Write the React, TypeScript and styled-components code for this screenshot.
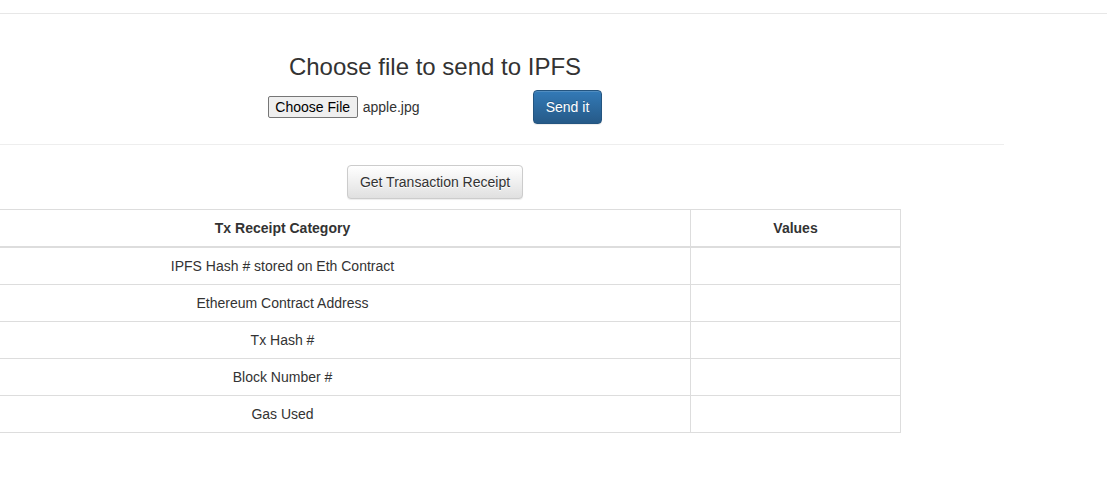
import React from "react";
import styled, { createGlobalStyle } from "styled-components";

const Global = createGlobalStyle`
  html, body { margin: 0; padding: 0; background: #fff; }
  body {
    font-family: "Liberation Sans", Arial, Helvetica, sans-serif;
    font-size: 14px;
    line-height: 1.42857143;
    color: #333;
    overflow: hidden;
  }
  * { box-sizing: border-box; }
`;

const TopBar = styled.div`
  height: 14px;
  border-bottom: 1px solid #e7e7e7;
`;

const Page = styled.div`
  display: flex;
  flex-direction: column;
`;

const Column = styled.div`
  width: 870px;
  display: flex;
  flex-direction: column;
  align-items: center;
`;

const Title = styled.h3`
  margin: 40px 0 0;
  font-size: 24px;
  font-weight: 500;
  line-height: 1.1;
  color: #333;
`;

const UploadForm = styled.form`
  margin-top: 10px;
  display: flex;
  align-items: center;
`;

const FilePicker = styled.div`
  width: 265px;
  display: flex;
  align-items: center;
  gap: 5px;
  margin-top: -1px;
`;

const FileButton = styled.span`
  display: inline-flex;
  align-items: center;
  justify-content: center;
  width: 90px;
  height: 22px;
  border: 1px solid #767676;
  border-radius: 2px;
  background: #efefef;
  font-size: 14px;
  color: #000;
`;

const FileName = styled.span`
  font-size: 14px;
  color: #333;
`;

const Button = styled.button<{ $primary?: boolean }>`
  display: inline-block;
  height: 34px;
  padding: 6px 12px;
  font-family: inherit;
  font-size: 14px;
  line-height: 1.42857143;
  border-radius: 4px;
  cursor: pointer;
  box-shadow: inset 0 1px 0 rgba(255, 255, 255, 0.15), 0 1px 1px rgba(0, 0, 0, 0.075);
  color: ${(p) => (p.$primary ? "#fff" : "#333")};
  border: 1px solid ${(p) => (p.$primary ? "#245580" : "#ccc")};
  background-image: ${(p) =>
    p.$primary
      ? "linear-gradient(to bottom, #337ab7 0, #265a88 100%)"
      : "linear-gradient(to bottom, #fff 0, #e0e0e0 100%)"};
  text-shadow: ${(p) => (p.$primary ? "0 -1px 0 rgba(0,0,0,.2)" : "0 1px 0 #fff")};
`;

const Rule = styled.hr`
  width: 1004px;
  margin: 20px 0;
  border: 0;
  border-top: 1px solid #eee;
`;

const ReceiptButtonRow = styled.div`
  width: 870px;
  display: flex;
  justify-content: center;
`;

const Table = styled.table`
  margin-top: 10px;
  margin-left: -126px;
  width: 1027px;
  border-collapse: collapse;
  border-spacing: 0;
  border: 1px solid #ddd;
`;

const Th = styled.th<{ $w?: number }>`
  padding: 8px;
  line-height: 1.42857143;
  text-align: center;
  font-weight: bold;
  border: 1px solid #ddd;
  border-bottom: 2px solid #ddd;
  width: ${(p) => (p.$w ? `${p.$w}px` : "auto")};
`;

const Td = styled.td`
  padding: 8px;
  height: 37px;
  line-height: 1.42857143;
  text-align: center;
  border: 1px solid #ddd;
`;

const rows = [
  "IPFS Hash # stored on Eth Contract",
  "Ethereum Contract Address",
  "Tx Hash #",
  "Block Number #",
  "Gas Used",
];

export default function App() {
  return (
    <>
      <Global />
      <TopBar />
      <Page>
        <Column>
          <Title>Choose file to send to IPFS</Title>
          <UploadForm onSubmit={(e) => e.preventDefault()}>
            <FilePicker>
              <FileButton>Choose File</FileButton>
              <FileName>apple.jpg</FileName>
            </FilePicker>
            <Button $primary type="submit">Send it</Button>
          </UploadForm>
        </Column>
        <Rule />
        <ReceiptButtonRow>
          <Button type="button">Get Transaction Receipt</Button>
        </ReceiptButtonRow>
        <Table>
          <thead>
            <tr>
              <Th $w={816}>Tx Receipt Category</Th>
              <Th>Values</Th>
            </tr>
          </thead>
          <tbody>
            {rows.map((r) => (
              <tr key={r}>
                <Td>{r}</Td>
                <Td></Td>
              </tr>
            ))}
          </tbody>
        </Table>
      </Page>
    </>
  );
}
